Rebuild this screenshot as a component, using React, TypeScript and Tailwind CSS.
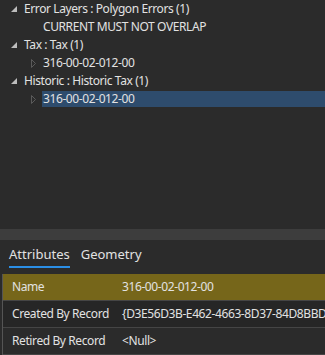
import React from "react";

const font = { fontFamily: '"Noto Sans", "Segoe UI", sans-serif' };

function Expanded() {
  return (
    <svg width="6" height="6" viewBox="0 0 6 6" className="shrink-0">
      <polygon points="6,0 6,6 0,6" fill="#bdbdbd" />
    </svg>
  );
}

function Collapsed() {
  return (
    <svg width="5" height="9" viewBox="0 0 5 9" className="shrink-0">
      <polygon points="0.5,0.5 4.5,4.5 0.5,8.5" fill="none" stroke="#5a5a5a" strokeWidth="1" />
    </svg>
  );
}

function Parent({ label }: { label: string }) {
  return (
    <div className="flex items-center h-[18px]">
      <div className="w-[24px] flex justify-end pr-[7px]">
        <Expanded />
      </div>
      <span>{label}</span>
    </div>
  );
}

function Child({ label, arrow, selected }: { label: string; arrow?: boolean; selected?: boolean }) {
  return (
    <div className="flex items-center h-[18px]">
      <div className="w-[42px] flex justify-end pr-[6px]">{arrow && <Collapsed />}</div>
      <div className={`flex-1 h-[16px] flex items-center pl-[1px] ${selected ? "bg-[#2e4c6d]" : ""}`}>
        {label}
      </div>
    </div>
  );
}

export default function App() {
  const rows = [
    { name: "Name", value: "316-00-02-012-00", bg: "bg-[#76661a]" },
    { name: "Created By Record", value: "{D3E56D3B-E462-4663-8D37-84D8BBD", bg: "bg-[#262626]" },
    { name: "Retired By Record", value: "<Null>", bg: "bg-[#2b2b2b]" },
  ];
  return (
    <div style={font} className="w-[325px] h-[355px] bg-[#2b2b2b] text-[#e2e2e2] text-[12px] flex flex-col overflow-hidden">
      <div className="h-[231px] tracking-[-0.4px]">
        <Parent label="Error Layers : Polygon Errors (1)" />
        <Child label="CURRENT MUST NOT OVERLAP" />
        <Parent label="Tax : Tax (1)" />
        <Child label="316-00-02-012-00" arrow />
        <Parent label="Historic : Historic Tax (1)" />
        <Child label="316-00-02-012-00" arrow selected />
      </div>
      <div className="h-[12px] bg-[#3d3d3d]" />
      <div className="flex items-end gap-[11px] px-[9px] h-[34px] text-[13px]">
        <div className="flex flex-col">
          <span className="leading-[18px]">Attributes</span>
          <div className="h-[2px] mt-[3px] mb-[6px] bg-[#2b8fe6]" />
        </div>
        <span className="leading-[18px] mb-[11px]">Geometry</span>
      </div>
      <div className="border-l border-[#555555] ml-[2px] flex-1 flex flex-col tracking-[-0.4px]">
        {rows.map((r) => (
          <div key={r.name} className={`flex items-center h-[27px] border-b border-[#454545] overflow-hidden ${r.bg}`}>
            <span className="w-[119px] pl-[9px] shrink-0">{r.name}</span>
            <span className="whitespace-nowrap">{r.value}</span>
          </div>
        ))}
      </div>
    </div>
  );
}
